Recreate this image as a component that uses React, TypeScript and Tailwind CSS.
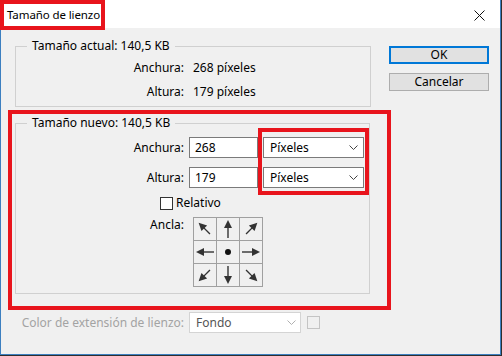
import type { ReactNode } from "react";

const red = "border-[#e8141c]";

function Chevron({ className }: { className?: string }) {
  return (
    <svg width="9" height="5" viewBox="0 0 9 5" className={className}>
      <path d="M0.5 0.5 L4.5 4.5 L8.5 0.5" fill="none" stroke="currentColor" strokeWidth="1" />
    </svg>
  );
}

function UnitSelect({ value }: { value: string }) {
  return (
    <div className="flex h-[21px] w-[101px] items-center justify-between border border-[#7a7a7a] bg-white pl-[6px] pr-[5px]">
      <span>{value}</span>
      <Chevron className="text-[#444]" />
    </div>
  );
}

function SizeField({ label, value }: { label: string; value: string }) {
  return (
    <div className="flex items-center">
      <span className="w-[168px] text-right">{label}</span>
      <div className="ml-[5px] flex h-[21px] w-[69px] items-center border border-[#7a7a7a] bg-white pl-[5px]">
        {value}
      </div>
    </div>
  );
}

function InfoRow({ label, value }: { label: string; value: string }) {
  return (
    <div className="flex h-[24px] items-center">
      <span className="w-[168px] text-right">{label}</span>
      <span className="ml-[9px]">{value}</span>
    </div>
  );
}

// angle in degrees, 0 = up
function Arrow({ angle, short }: { angle: number; short?: boolean }) {
  const tail = short ? 18 : 20;
  return (
    <svg width="22" height="22" viewBox="0 0 22 22">
      <g transform={`rotate(${angle} 11 11)`} fill="#333" stroke="#333">
        <line x1="11" y1={tail} x2="11" y2="8" strokeWidth="1.4" />
        <polygon points="11,2 7,10 15,10" stroke="none" />
      </g>
    </svg>
  );
}

function AnchorGrid() {
  const cells: ReactNode[] = [
    <Arrow key="nw" angle={-45} short />,
    <Arrow key="n" angle={0} />,
    <Arrow key="ne" angle={45} short />,
    <Arrow key="w" angle={-90} />,
    <svg key="c" width="22" height="22" viewBox="0 0 22 22">
      <circle cx="11" cy="11" r="3" fill="#111" />
    </svg>,
    <Arrow key="e" angle={90} />,
    <Arrow key="sw" angle={-135} short />,
    <Arrow key="s" angle={180} />,
    <Arrow key="se" angle={135} short />,
  ];
  return (
    <div className="ml-[9px] grid grid-cols-[repeat(3,22px)] gap-px bg-[#a0a0a0] p-px">
      {cells.map((c, i) => (
        <div key={i} className="flex h-[22px] w-[22px] items-center justify-center bg-[#f0f0f0]">
          {c}
        </div>
      ))}
    </div>
  );
}

export default function App() {
  return (
    <div className="h-[356px] w-[502px] bg-[#2e2e2e] font-['Noto_Sans',sans-serif] text-[12px] leading-[16px] text-black">
      <div className="flex h-[355px] w-[501px] flex-col border-x border-b border-[#3c7fc0] bg-[#f0f0f0]">
        {/* title bar */}
        <div className="flex h-[28px] shrink-0 items-start justify-between bg-white pr-[15px]">
          <div className={`relative z-10 -ml-px flex h-[30px] w-[105px] items-center whitespace-nowrap border-4 ${red} bg-white pl-[3px] text-[11.5px] tracking-[-0.1px]`}>
            Tamaño de lienzo
          </div>
          <svg width="11" height="11" viewBox="0 0 11 11" className="mt-[10px]">
            <path d="M0.5 0.5 L10.5 10.5 M10.5 0.5 L0.5 10.5" stroke="#111" strokeWidth="1" />
          </svg>
        </div>

        <div className="flex flex-1">
          <div className="flex w-[388px] shrink-0 flex-col pl-[7px]">
            <fieldset className="ml-[7px] mt-[10px] w-[356px] border border-[#d0d0d0] pb-[2px]">
              <legend className="ml-[11px] px-[5px] leading-[16px]">Tamaño actual: 140,5 KB</legend>
              <div className="pt-[2px]">
                <InfoRow label="Anchura:" value="268 píxeles" />
                <InfoRow label="Altura:" value="179 píxeles" />
              </div>
            </fieldset>

            <div className={`mt-[3px] h-[200px] w-[383px] shrink-0 border-4 ${red} pl-[3px]`}>
              <fieldset className="mt-px w-[355px] border border-[#d0d0d0] pb-[6px]">
                <legend className="ml-[11px] px-[5px] leading-[16px]">Tamaño nuevo: 140,5 KB</legend>
                <div className="-mt-[3px] flex items-start">
                  <div className="flex flex-col gap-[9px] pt-[9px]">
                    <SizeField label="Anchura:" value="268" />
                    <SizeField label="Altura:" value="179" />
                  </div>
                  <div className={`flex flex-col gap-[9px] border-4 ${red} px-px pb-[3px] pt-[5px]`}>
                    <UnitSelect value="Píxeles" />
                    <UnitSelect value="Píxeles" />
                  </div>
                </div>
                <div className="flex items-center gap-[3px] pl-[144px]">
                  <span className="h-[13px] w-[13px] border border-[#333] bg-white" />
                  <span>Relativo</span>
                </div>
                <div className="mt-[6px] flex items-start">
                  <span className="w-[168px] text-right">Ancla:</span>
                  <AnchorGrid />
                </div>
              </fieldset>
            </div>

            <div className="mt-[2px] flex items-center">
              <span className="w-[176px] text-right text-[#a3a3a3]">Color de extensión de lienzo:</span>
              <div className="ml-[5px] flex h-[21px] w-[112px] items-center justify-between border border-[#d4d4d4] bg-white pl-[6px] pr-[4px] text-[#555]">
                <span>Fondo</span>
                <Chevron className="text-[#b0b0b0]" />
              </div>
              <span className="ml-[6px] h-[13px] w-[13px] border border-[#c4c4c4]" />
            </div>
          </div>

          <div className="flex w-[100px] flex-col gap-[9px] pt-[18px]">
            <button type="button" className="h-[18px] border-2 border-[#0078d7] bg-[#e1e1e1] leading-[14px]">
              OK
            </button>
            <button type="button" className="h-[18px] border border-[#adadad] bg-[#e1e1e1] leading-[16px]">
              Cancelar
            </button>
          </div>
        </div>
      </div>
    </div>
  );
}
